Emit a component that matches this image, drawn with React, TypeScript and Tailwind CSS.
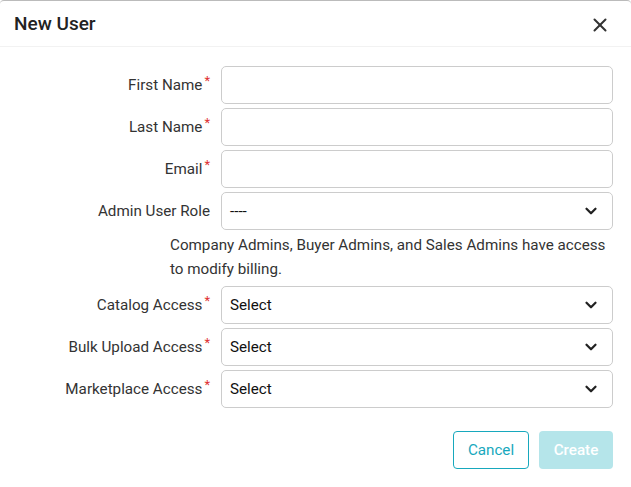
import { ChevronDown, X } from "lucide-react";

type FieldProps = {
  label: string;
  required?: boolean;
  children: React.ReactNode;
};

const Field = ({ label, required, children }: FieldProps) => (
  <div className="grid grid-cols-[221px_1fr] items-center">
    <label className="flex justify-end pr-[11px] text-[15.2px] text-[#333]">
      <span>{label}</span>
      {required && (
        <span className="-mt-[3px] ml-[2px] text-[13px] text-[#e03131]">*</span>
      )}
    </label>
    {children}
  </div>
);

const TextInput = () => (
  <input
    type="text"
    className="h-[38px] w-full rounded-[5px] border border-[#ccc] bg-white px-2 outline-none"
  />
);

const SelectBox = ({ value }: { value: string }) => (
  <div className="flex h-[38px] w-full items-center justify-between rounded-[5px] border border-[#ccc] bg-white pl-2 pr-[12px] text-[15.2px] text-[#111]">
    <span>{value}</span>
    <ChevronDown size={18} strokeWidth={3} className="text-[#222]" />
  </div>
);

export default function App() {
  return (
    <div
      className="h-[487px] w-[631px] overflow-hidden rounded-t-[4px] border-t border-[#bbb] bg-white"
      style={{ fontFamily: "Roboto, 'Liberation Sans', sans-serif" }}
    >
      <div className="flex h-[46px] items-center justify-between border-b border-[#f2f2f2] pl-[14px] pr-[20px] pt-[2px]">
        <h2 className="text-[19px] font-medium text-[#222]">New User</h2>
        <X size={22} strokeWidth={2.2} className="text-[#333]" />
      </div>

      <div className="pr-[18px] pt-[19px]">
        <div className="flex flex-col gap-[4px]">
          <Field label="First Name" required>
            <TextInput />
          </Field>
          <Field label="Last Name" required>
            <TextInput />
          </Field>
          <Field label="Email" required>
            <TextInput />
          </Field>
          <Field label="Admin User Role">
            <SelectBox value="----" />
          </Field>
        </div>

        <p className="mb-[5px] mt-[3px] pl-[170px] text-[15.2px] leading-[24px] text-[#333]">
          Company Admins, Buyer Admins, and Sales Admins have access to modify
          billing.
        </p>

        <div className="flex flex-col gap-[4px]">
          <Field label="Catalog Access" required>
            <SelectBox value="Select" />
          </Field>
          <Field label="Bulk Upload Access" required>
            <SelectBox value="Select" />
          </Field>
          <Field label="Marketplace Access" required>
            <SelectBox value="Select" />
          </Field>
        </div>

        <div className="mt-[23px] flex justify-end gap-[10px]">
          <button className="h-[38px] w-[76px] rounded-[4px] border border-[#17a8bd] text-[15.2px] text-[#17a8bd]">
            Cancel
          </button>
          <button className="h-[38px] w-[74px] rounded-[4px] bg-[#b5e5ea] text-[15.2px] font-medium text-white">
            Create
          </button>
        </div>
      </div>
    </div>
  );
}
